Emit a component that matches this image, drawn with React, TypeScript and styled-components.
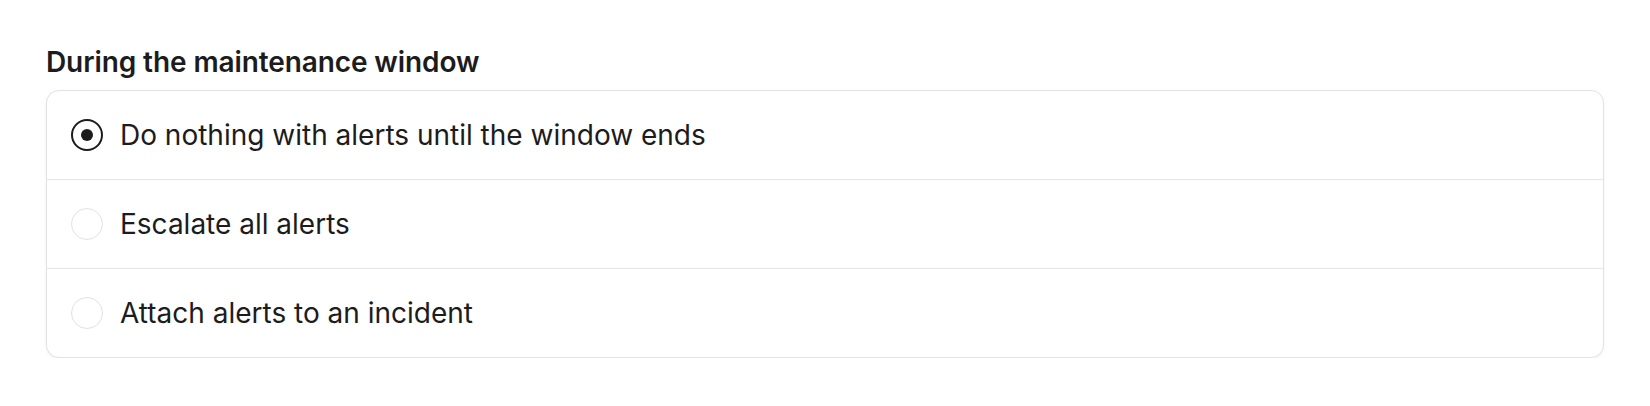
import React, { useState } from "react";
import styled, { createGlobalStyle } from "styled-components";

const Global = createGlobalStyle`
  html, body { margin: 0; padding: 0; background: #ffffff; }
  body { font-family: Inter, "Noto Sans", sans-serif; color: #1c1c1c; -webkit-font-smoothing: antialiased; }
`;

const Page = styled.div`
  padding: 45px 46px 0 46px;
`;

const Heading = styled.h2`
  margin: 0 0 11px 0;
  font-size: 28px;
  line-height: 34px;
  font-weight: 600;
  letter-spacing: -0.1px;
  color: #1c1c1c;
`;

const Card = styled.div`
  border: 1px solid #e3e3e3;
  border-radius: 13px;
  background: #fff;
  box-shadow: 0 1px 3px rgba(0, 0, 0, 0.06);
  overflow: hidden;
`;

const Row = styled.label<{ $last?: boolean }>`
  display: flex;
  align-items: center;
  gap: 17px;
  height: 88px;
  padding: 0 24px;
  border-bottom: ${(p) => (p.$last ? "none" : "1px solid #e6e6e6")};
  cursor: pointer;
`;

const Radio = styled.span<{ $checked: boolean }>`
  box-sizing: border-box;
  width: 32px;
  height: 32px;
  border-radius: 50%;
  flex: none;
  border: ${(p) => (p.$checked ? "2px solid #1c1c1c" : "1px solid #e2e2e2")};
  display: flex;
  align-items: center;
  justify-content: center;
`;

const Dot = styled.span`
  width: 12px;
  height: 12px;
  border-radius: 50%;
  background: #1c1c1c;
`;

const Label = styled.span`
  font-size: 28px;
  line-height: 34px;
  font-weight: 400;
  color: #1c1c1c;
`;

const options = [
  "Do nothing with alerts until the window ends",
  "Escalate all alerts",
  "Attach alerts to an incident",
];

export default function App() {
  const [sel, setSel] = useState(0);
  return (
    <>
      <Global />
      <Page>
        <Heading>During the maintenance window</Heading>
        <Card>
          {options.map((o, i) => (
            <Row key={o} $last={i === options.length - 1} onClick={() => setSel(i)}>
              <Radio $checked={sel === i}>{sel === i && <Dot />}</Radio>
              <Label>{o}</Label>
            </Row>
          ))}
        </Card>
      </Page>
    </>
  );
}
